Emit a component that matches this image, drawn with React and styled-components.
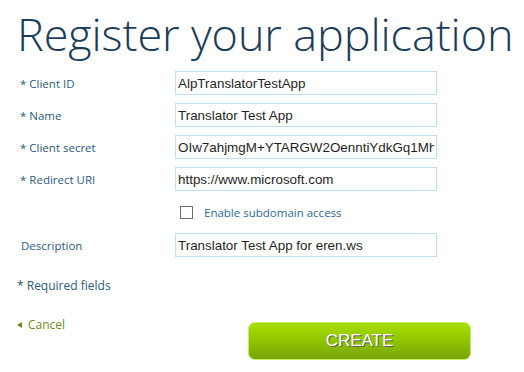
import React, { useState } from "react";
import styled, { createGlobalStyle } from "styled-components";

const GlobalStyle = createGlobalStyle`
  html, body {
    margin: 0;
    padding: 0;
    background: #ffffff;
  }
  body {
    font-family: "Open Sans", "Noto Sans", sans-serif;
  }
`;

const fields = [
  { label: "* Client ID", value: "AlpTranslatorTestApp" },
  { label: "* Name", value: "Translator Test App" },
  { label: "* Client secret", value: "OIw7ahjmgM+YTARGW2OenntiYdkGq1MhnQ0s" },
  { label: "* Redirect URI", value: "https://www.microsoft.com" },
];

export default function App() {
  const [values, setValues] = useState(fields.map((f) => f.value));
  const [description, setDescription] = useState("Translator Test App for eren.ws");
  const [subdomain, setSubdomain] = useState(false);

  const handleChange = (index, value) => {
    setValues(values.map((v, i) => (i === index ? value : v)));
  };

  return (
    <Page>
      <GlobalStyle />
      <Title>Register your application</Title>
      <Form>
        {fields.map((field, index) => (
          <React.Fragment key={field.label}>
            <Label>{field.label}</Label>
            <TextInput
              value={values[index]}
              onChange={(e) => handleChange(index, e.target.value)}
            />
          </React.Fragment>
        ))}
        <span />
        <CheckRow>
          <Checkbox
            checked={subdomain}
            onChange={() => setSubdomain(!subdomain)}
          />
          Enable subdomain access
        </CheckRow>
        <Label $indent>Description</Label>
        <TextInput
          value={description}
          onChange={(e) => setDescription(e.target.value)}
        />
      </Form>
      <Required>* Required fields</Required>
      <Footer>
        <CancelLink href="#">
          <Arrow />
          Cancel
        </CancelLink>
        <CreateButton>CREATE</CreateButton>
      </Footer>
    </Page>
  );
}

const Page = styled.div`
  width: 524px;
  height: 372px;
  overflow: hidden;
  display: flex;
  flex-direction: column;
`;

const Title = styled.h1`
  margin: 9px 0 0 17px;
  font-family: "Open Sans", "Noto Sans", sans-serif;
  font-weight: 300;
  font-size: 45px;
  line-height: 50px;
  color: #1c3d58;
  white-space: nowrap;
  letter-spacing: -0.1px;
`;

const Form = styled.div`
  display: grid;
  grid-template-columns: 175px 262px;
  grid-template-rows: 24px 24px 24px 24px 26px 24px;
  row-gap: 8px;
  margin-top: 12px;
`;

const Label = styled.label`
  display: flex;
  align-items: center;
  padding-left: ${(p) => (p.$indent ? "21px" : "20px")};
  font-size: 11.5px;
  color: #2b5b7c;
`;

const TextInput = styled.input.attrs({ type: "text" })`
  box-sizing: border-box;
  width: 262px;
  height: 24px;
  margin: 0;
  padding: 0 2px;
  border: 1px solid #bfe1f1;
  font-family: "Liberation Sans", Arial, sans-serif;
  font-size: 13.4px;
  color: #1f1f1f;
  background: #ffffff;
  outline: none;
  overflow: hidden;
`;

const CheckRow = styled.label`
  display: flex;
  align-items: center;
  gap: 11px;
  padding-left: 5px;
  font-size: 11.5px;
  color: #2d6a92;
`;

const Checkbox = styled.input.attrs({ type: "checkbox" })`
  appearance: none;
  box-sizing: border-box;
  width: 13px;
  height: 13px;
  margin: 0;
  border: 1px solid #6f6f6f;
  background: #ffffff;
`;

const Required = styled.div`
  margin: 21px 0 0 17px;
  font-size: 12px;
  line-height: 16px;
  color: #2b5b7c;
`;

const Footer = styled.div`
  display: flex;
  align-items: flex-start;
  margin-top: 20px;
`;

const CancelLink = styled.a`
  display: flex;
  align-items: center;
  gap: 6px;
  width: 231px;
  margin: 3px 0 0 17px;
  font-size: 12px;
  line-height: 16px;
  color: #6e8a1c;
  text-decoration: none;
`;

const Arrow = styled.span`
  width: 0;
  height: 0;
  border-top: 3px solid transparent;
  border-bottom: 3px solid transparent;
  border-right: 5px solid #6e8a1c;
`;

const CreateButton = styled.button`
  box-sizing: border-box;
  width: 223px;
  height: 38px;
  margin-top: 8px;
  border: 1px solid #c6ec60;
  border-radius: 7px;
  background: linear-gradient(to bottom, #a9de00 0%, #90c400 50%, #76a40a 100%);
  font-family: "Liberation Sans", Arial, sans-serif;
  font-size: 17px;
  color: #ffffff;
  text-shadow: 1px 1px 0 #5a5a5a;
  cursor: pointer;
`;
